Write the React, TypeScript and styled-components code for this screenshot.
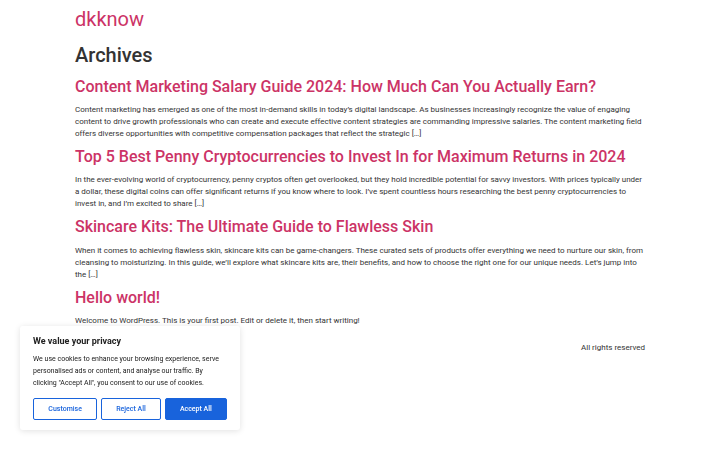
import React, { ReactElement } from 'react'
import styled, { createGlobalStyle } from 'styled-components'

const GlobalStyle = createGlobalStyle`
  html, body {
    margin: 0;
    padding: 0;
    background: #fff;
  }
  body {
    font-family: Roboto, "Liberation Sans", Arial, sans-serif;
    font-size: 8px;
    line-height: 1.5;
    color: #333;
  }
`

const Page = styled.div`
  width: 570px;
  margin: 0 auto;
`

const Header = styled.header`
  padding: 7px 0 12px;
`

const SiteTitle = styled.a`
  display: block;
  font-size: 20px;
  line-height: 1.2;
  color: #c36;
  text-decoration: none;
  font-weight: 400;
`

const Main = styled.main``

const PageTitle = styled.h1`
  margin: 0 0 10px;
  font-size: 20px;
  line-height: 1.2;
  font-weight: 500;
  color: #333;
`

const Post = styled.article`
  margin-bottom: 7px;
`

const PostTitle = styled.h2`
  margin: 0 0 8px;
  font-size: 16px;
  line-height: 1.2;
  font-weight: 500;

  a {
    color: #c36;
    text-decoration: none;
  }
`

const Excerpt = styled.p`
  margin: 0;
  font-size: 8px;
  line-height: 12px;
  color: #333;
`

const Footer = styled.footer`
  display: flex;
  justify-content: flex-end;
  padding: 8px 0 15px;
`

const Copyright = styled.p`
  margin: 0;
  font-size: 8px;
`

const CookieBox = styled.div`
  position: fixed;
  left: 20px;
  bottom: 20px;
  width: 220px;
  box-sizing: border-box;
  padding: 9px 13px 10px;
  background: #fff;
  border-radius: 3px;
  box-shadow: 0 1px 6px rgba(0, 0, 0, 0.12);
`

const CookieTitle = styled.p`
  margin: 0 0 5px;
  font-size: 9px;
  font-weight: 700;
  color: #212121;
`

const CookieText = styled.p`
  margin: 0 0 9px;
  font-size: 7px;
  line-height: 12px;
  color: #212121;
`

const ButtonRow = styled.div`
  display: flex;
  gap: 4px;
`

const CookieButton = styled.button<{ $filled?: boolean; $grow: number }>`
  flex: ${(p) => p.$grow} 1 0;
  height: 22px;
  padding: 0;
  border: 1px solid #1863dc;
  border-radius: 2px;
  background: ${(p) => (p.$filled ? '#1863dc' : '#fff')};
  color: ${(p) => (p.$filled ? '#fff' : '#1863dc')};
  font-family: Roboto, "Liberation Sans", Arial, sans-serif;
  font-size: 7px;
  font-weight: 500;
  cursor: pointer;
`

const posts = [
  {
    title: 'Content Marketing Salary Guide 2024: How Much Can You Actually Earn?',
    excerpt:
      'Content marketing has emerged as one of the most in-demand skills in today’s digital landscape. As businesses increasingly recognize the value of engaging content to drive growth professionals who can create and execute effective content strategies are commanding impressive salaries. The content marketing field offers diverse opportunities with competitive compensation packages that reflect the strategic […]',
  },
  {
    title: 'Top 5 Best Penny Cryptocurrencies to Invest In for Maximum Returns in 2024',
    excerpt:
      'In the ever-evolving world of cryptocurrency, penny cryptos often get overlooked, but they hold incredible potential for savvy investors. With prices typically under a dollar, these digital coins can offer significant returns if you know where to look. I’ve spent countless hours researching the best penny cryptocurrencies to invest in, and I’m excited to share […]',
  },
  {
    title: 'Skincare Kits: The Ultimate Guide to Flawless Skin',
    excerpt:
      'When it comes to achieving flawless skin, skincare kits can be game-changers. These curated sets of products offer everything we need to nurture our skin, from cleansing to moisturizing. In this guide, we’ll explore what skincare kits are, their benefits, and how to choose the right one for our unique needs. Let’s jump into the […]',
  },
  {
    title: 'Hello world!',
    excerpt: 'Welcome to WordPress. This is your first post. Edit or delete it, then start writing!',
  },
]

function App(): ReactElement {
  return (
    <>
      <GlobalStyle />
      <Page>
        <Header>
          <SiteTitle href="#">dkknow</SiteTitle>
        </Header>
        <Main>
          <PageTitle>Archives</PageTitle>
          {posts.map((post) => (
            <Post key={post.title}>
              <PostTitle>
                <a href="#">{post.title}</a>
              </PostTitle>
              <Excerpt>{post.excerpt}</Excerpt>
            </Post>
          ))}
        </Main>
        <Footer>
          <Copyright>All rights reserved</Copyright>
        </Footer>
      </Page>

      <CookieBox>
        <CookieTitle>We value your privacy</CookieTitle>
        <CookieText>
          We use cookies to enhance your browsing experience, serve personalised ads or content, and
          analyse our traffic. By clicking "Accept All", you consent to our use of cookies.
        </CookieText>
        <ButtonRow>
          <CookieButton $grow={64}>Customise</CookieButton>
          <CookieButton $grow={59}>Reject All</CookieButton>
          <CookieButton $grow={62} $filled>
            Accept All
          </CookieButton>
        </ButtonRow>
      </CookieBox>
    </>
  )
}

export default App
